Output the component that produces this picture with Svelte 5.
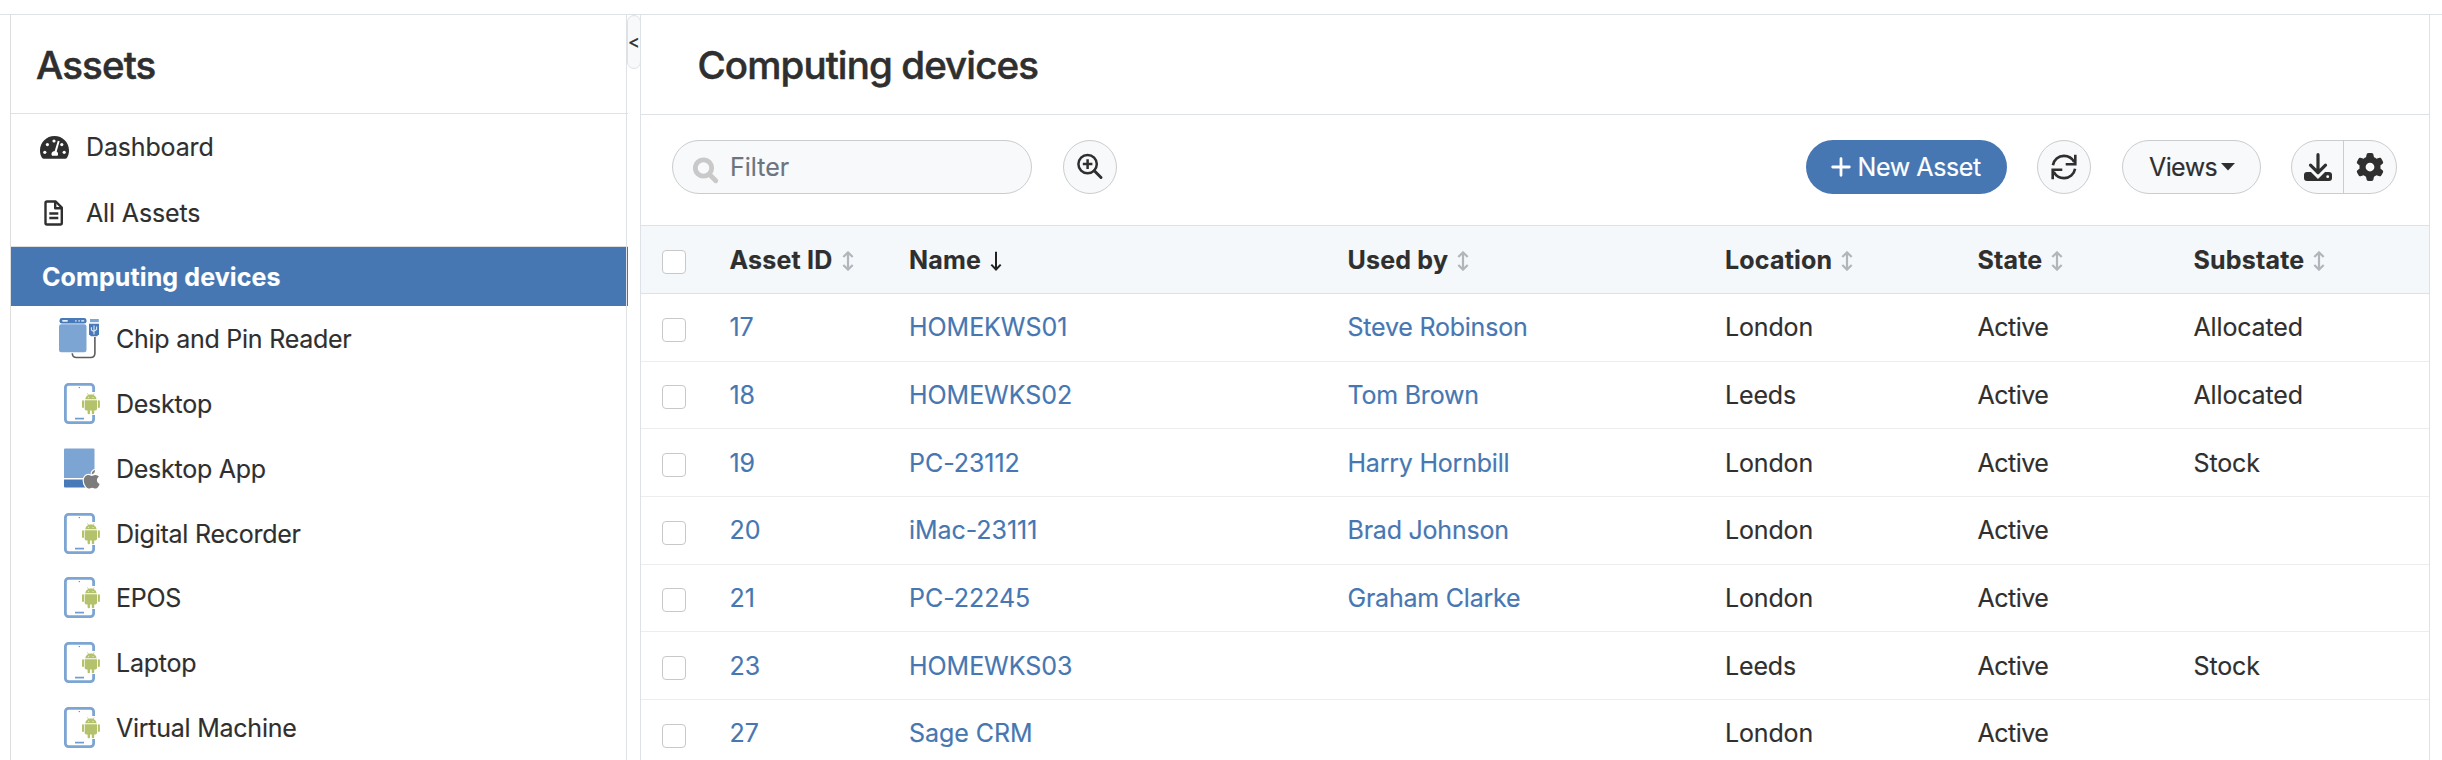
<script>
  const assetTypes = [
    { name: 'Chip and Pin Reader', icon: 'chip' },
    { name: 'Desktop', icon: 'tablet' },
    { name: 'Desktop App', icon: 'app' },
    { name: 'Digital Recorder', icon: 'tablet' },
    { name: 'EPOS', icon: 'tablet' },
    { name: 'Laptop', icon: 'tablet' },
    { name: 'Virtual Machine', icon: 'tablet' }
  ];

  const columns = ['Asset ID', 'Name', 'Used by', 'Location', 'State', 'Substate'];

  const rows = [
    { id: '17', name: 'HOMEKWS01', user: 'Steve Robinson', location: 'London', state: 'Active', substate: 'Allocated' },
    { id: '18', name: 'HOMEWKS02', user: 'Tom Brown', location: 'Leeds', state: 'Active', substate: 'Allocated' },
    { id: '19', name: 'PC-23112', user: 'Harry Hornbill', location: 'London', state: 'Active', substate: 'Stock' },
    { id: '20', name: 'iMac-23111', user: 'Brad Johnson', location: 'London', state: 'Active', substate: '' },
    { id: '21', name: 'PC-22245', user: 'Graham Clarke', location: 'London', state: 'Active', substate: '' },
    { id: '23', name: 'HOMEWKS03', user: '', location: 'Leeds', state: 'Active', substate: 'Stock' },
    { id: '27', name: 'Sage CRM', user: '', location: 'London', state: 'Active', substate: '' }
  ];
</script>

{#snippet typeIcon(kind)}
  <svg class="type-icon" width="42" height="42" viewBox="0 0 42 42">
    {#if kind === 'chip'}
      <rect x="0.5" y="0" width="27" height="5.6" rx="2.4" fill="#487ab9" />
      <path d="M4 2.8h4" stroke="#e6eef7" stroke-width="1.8" stroke-linecap="round" />
      <path d="M16.2 2.8h1.4M19.4 2.8h1.4M22.2 2.8h3" stroke="#c3d5ea" stroke-width="1.8" />
      <rect x="0" y="6.2" width="27.5" height="28" rx="2.2" fill="#7da5d3" />
      <rect x="31" y="1" width="8.8" height="3.2" fill="#7da5d3" />
      <path d="M30 5.8h10v10.4l-2 2h-6l-2-2z" fill="#487ab9" />
      <path d="M35 7.5v9M32.4 9.3v2.6l2.6 2M37.6 8.6v2.8l-2.6 2" fill="none" stroke="#dce7f4" stroke-width="1.1" />
      <path d="M13.3 35.2c0 2.5 1.7 4.3 4.2 4.3h14.2c2.5 0 4.2-1.7 4.2-4.2V19" fill="none" stroke="#5d5d5d" stroke-width="1.6" />
    {:else if kind === 'tablet'}
      <rect x="6.4" y="1.4" width="28.2" height="38.2" rx="3.2" fill="none" stroke="#7da5d3" stroke-width="2.8" />
      <rect x="32" y="9" width="4" height="23" fill="#fff" />
      <circle cx="20.3" cy="4.6" r="0.7" fill="#487ab9" />
      <path d="M16 35.6h9" stroke="#6f9bce" stroke-width="1.7" />
      <g fill="#b3c26b">
        <path d="M26.3 16.3c.2-2.8 2.6-4.7 5.600-4.700s5.400 1.900 5.600 4.700z" />
        <path d="M28.400 10.300l1.300 2M35.200 10.300l-1.300 2" stroke="#b3c26b" stroke-width=".7" />
        <path d="M25.700 17.200h12.300v8.500q0 1.700-1.600 1.700h-9.100q-1.600 0-1.600-1.700z" />
        <rect x="23" y="17.200" width="2" height="7.800" rx="1" />
        <rect x="38.900" y="17.200" width="2" height="7.800" rx="1" />
        <rect x="28.600" y="26" width="2.400" height="5.300" rx="1" />
        <rect x="32.800" y="26" width="2.400" height="5.300" rx="1" />
      </g>
      <circle cx="29.600" cy="14.300" r=".5" fill="#fff" />
      <circle cx="34" cy="14.300" r=".5" fill="#fff" />
    {:else}
      <path d="M5 1.500q0-1 1-1h28.500q1 0 1 1v28.500h-30.500z" fill="#7da5d3" />
      <path d="M5 31.500h30.500v8h-29.500q-1 0-1-1z" fill="#487ab9" />
      <g fill="#7c7c7c" stroke="#fff" stroke-width="2.400" stroke-linejoin="round" paint-order="stroke">
        <path d="M32.800 26.400c-.3-2.200 1.400-4.100 3.200-4.300.2 2.200-1.300 4.100-3.200 4.300z" />
        <path d="M32.700 27.900c1 0 2-1 3.700-1 1.400 0 2.700.7 3.500 1.900-3 1.900-2.500 5.900.7 7.100-.8 2.200-2.300 4.700-4 4.700-1.300 0-1.800-.8-3.400-.8s-2.200.8-3.400.8c-2.300 0-5-4.400-5-8 0-3.500 2.200-5.600 4.600-5.600 1.500 0 2.500.9 3.300.9z" />
      </g>
    {/if}
  </svg>
{/snippet}

<div class="page">
  <aside class="sidebar">
    <h2>Assets</h2>
    <nav>
      <a class="top-link" href="#dashboard">
        <svg width="29" height="23" viewBox="0 0 29 23">
          <path d="M14.500 0C6.500 0 0 6.400 0 14.400c0 2.700.7 5.200 2 7.400.4.700 1 1 1.700 1h21.600c.7 0 1.300-.3 1.700-1 1.300-2.200 2-4.700 2-7.400C29 6.400 22.500 0 14.500 0z" fill="#2f2f2f" />
          <g fill="#fff">
            <circle cx="4.800" cy="16.300" r="1.600" /><circle cx="7.400" cy="8.600" r="1.600" />
            <circle cx="14" cy="5" r="1.600" /><circle cx="21.800" cy="8.600" r="1.600" />
            <circle cx="24.200" cy="16.300" r="1.600" />
            <path d="M17.800 4.700l1.800.6-2.900 10.300c1.300.9 1.800 2.600.9 4.100h-5.600c-1.300-2.200.2-4.500 2.700-4.700z" />
          </g>
        </svg>
        <span>Dashboard</span>
      </a>
      <a class="top-link" href="#all">
        <svg width="29" height="26" viewBox="0 0 29 26">
          <g fill="none" stroke="#2f2f2f" stroke-width="2.400" stroke-linejoin="round">
            <path d="M7 1.500h8.700l6.100 6.100v15.400q0 1.500-1.500 1.500h-13.300q-1.500 0-1.500-1.500v-20q0-1.500 1.500-1.500z" />
            <path d="M15.200 1.500v6.700h6.600" />
            <path d="M9.300 13.500h9M9.300 18h9" />
          </g>
        </svg>
        <span>All Assets</span>
      </a>
    </nav>
    <a class="current" href="#computing">Computing devices</a>
    <nav class="types">
      {#each assetTypes as type}
        <a class="type-link" href="#type">
          {@render typeIcon(type.icon)}
          <span>{type.name}</span>
        </a>
      {/each}
    </nav>
  </aside>

  <div class="gutter"><button class="collapse" aria-label="Collapse">&lt;</button></div>

  <main>
    <h1>Computing devices</h1>
    <div class="toolbar">
      <div class="filter">
        <svg width="28" height="28" viewBox="0 0 28 28" fill="none" stroke="#c9c9c9" stroke-width="4.800">
          <circle cx="10.500" cy="11" r="8.200" />
          <path d="M16.500 17.500l6.300 6.300" stroke-linecap="round" />
        </svg>
        <span>Filter</span>
      </div>
      <button class="round" aria-label="Advanced search">
        <svg width="28" height="28" viewBox="0 0 28 28" fill="none" stroke="#2f2f2f" stroke-width="2.500">
          <circle cx="11.600" cy="11.100" r="9.200" />
          <path d="M6.800 11.100h9.600M11.600 6.300v9.600" />
          <path d="M18.300 17.800l6.700 6.700" stroke-width="3" stroke-linecap="round" />
        </svg>
      </button>
      <div class="spacer"></div>
      <button class="primary">
        <svg width="20" height="20" viewBox="0 0 20 20" stroke="#fff" stroke-width="2.800" stroke-linecap="round">
          <path d="M1.700 10h16.600M10 1.700v16.600" />
        </svg>
        <span>New Asset</span>
      </button>
      <button class="round refresh" aria-label="Refresh">
        <svg width="26" height="26" viewBox="0 0 26 26" fill="none" stroke="#2f2f2f" stroke-width="2.600">
          <path d="M1.900 11.200C2.900 5.800 7.300 1.900 12.900 1.900c4.500 0 8.400 2.500 10.400 6.200" />
          <path d="M24.300.7v9.600h-9.600" />
          <path d="M24.100 14.800c-1 5.400-5.500 9.300-11 9.300-4.500 0-8.400-2.500-10.400-6.200" />
          <path d="M1.700 25.300v-9.600h9.600" />
        </svg>
      </button>
      <button class="views">
        <span>Views</span>
        <svg width="14" height="8" viewBox="0 0 14 8"><path d="M0 0h14l-7 7.500z" fill="#2f2f2f" /></svg>
      </button>
      <div class="group">
        <button aria-label="Download">
          <svg width="28" height="28" viewBox="0 0 28 28">
            <rect x="0" y="19" width="28" height="9" rx="3" fill="#2f2f2f" />
            <path d="M5.500 13l8.500 8.300 8.500-8.300" fill="none" stroke="#f8f9fb" stroke-width="6.600" />
            <path d="M14 1.700v18M6.500 12.200l7.500 7.500 7.500-7.500" fill="none" stroke="#2f2f2f" stroke-width="3.200" stroke-linecap="round" stroke-linejoin="round" />
            <circle cx="23.700" cy="23.700" r="1.400" fill="#fff" />
          </svg>
        </button>
        <button aria-label="Settings">
          <svg width="28" height="28" viewBox="0 0 512 512">
            <path fill="#2f2f2f" d="M495.9 166.6c3.2 8.7 .5 18.4-6.4 24.6l-43.3 39.4c1.1 8.3 1.7 16.8 1.7 25.4s-.6 17.1-1.7 25.4l43.3 39.4c6.9 6.2 9.6 15.9 6.4 24.6c-4.400 11.900-9.700 23.300-15.800 34.300l-4.700 8.100c-6.600 11-14 21.400-22.100 31.200c-5.900 7.200-15.700 9.600-24.500 6.800l-55.700-17.700c-13.400 10.300-28.200 18.900-44 25.400l-12.500 57.100c-2 9.100-9 16.300-18.200 17.800c-13.800 2.300-28 3.500-42.500 3.500s-28.700-1.200-42.500-3.500c-9.200-1.500-16.200-8.700-18.200-17.800l-12.500-57.100c-15.800-6.500-30.600-15.100-44-25.400L83.100 425.900c-8.800 2.800-18.600 .3-24.500-6.800c-8.100-9.800-15.500-20.200-22.100-31.200l-4.700-8.100c-6.100-11-11.400-22.400-15.800-34.300c-3.200-8.700-.5-18.400 6.400-24.600l43.300-39.400C64.600 273.100 64 264.600 64 256s.6-17.100 1.700-25.400L22.400 191.200c-6.900-6.200-9.600-15.900-6.400-24.600c4.400-11.900 9.700-23.300 15.800-34.300l4.700-8.100c6.600-11 14-21.400 22.100-31.200c5.900-7.200 15.700-9.600 24.500-6.800l55.700 17.700c13.400-10.300 28.200-18.900 44-25.400l12.500-57.100c2-9.100 9-16.300 18.200-17.800C227.300 1.200 241.500 0 256 0s28.700 1.200 42.500 3.500c9.200 1.500 16.200 8.700 18.200 17.800l12.500 57.100c15.800 6.500 30.600 15.100 44 25.400l55.700-17.700c8.800-2.800 18.600-.3 24.500 6.800c8.100 9.800 15.500 20.200 22.100 31.200l4.700 8.100c6.100 11 11.400 22.400 15.800 34.300zM256 336a80 80 0 1 0 0-160 80 80 0 1 0 0 160z" />
          </svg>
        </button>
      </div>
    </div>

    <div class="table">
      <div class="row head">
        <div><span class="check"></span></div>
        {#each columns as column}
          <div>
            <span>{column}</span>
            {#if column === 'Name'}
              <svg class="sort" width="12" height="20" viewBox="0 0 12 20" fill="none" stroke="#222" stroke-width="2">
                <path d="M6 .7v17.800M1.300 13.600l4.700 4.900 4.700-4.900" />
              </svg>
            {:else}
              <svg class="sort" width="12" height="20" viewBox="0 0 12 20" fill="none" stroke="#b2b6ba" stroke-width="2.200">
                <path d="M6 1.500v17M1.300 6l4.700-4.600 4.700 4.600M1.300 14l4.700 4.600 4.700-4.600" />
              </svg>
            {/if}
          </div>
        {/each}
      </div>
      {#each rows as row}
        <div class="row">
          <div><span class="check"></span></div>
          <div><a class="plain" href="#asset">{row.id}</a></div>
          <div><a class="plain" href="#asset">{row.name}</a></div>
          <div>{#if row.user}<a href="#user">{row.user}</a>{/if}</div>
          <div>{row.location}</div>
          <div class="state">{row.state}</div>
          <div>{row.substate}</div>
        </div>
      {/each}
    </div>
  </main>
</div>

<style>
  :global(body) { margin: 0; background: #fff; overflow: hidden; }
  .page {
    box-sizing: border-box; height: 760px; padding: 15px 12px 0 10px;
    display: grid; grid-template-columns: 618px 12px 1fr; grid-template-rows: 745px; overflow: hidden;
    background: linear-gradient(#dee2e6, #dee2e6) 0 14px / 100% 1px no-repeat #fff;
    font: 400 25px/30px Inter, "Liberation Sans", sans-serif; letter-spacing: -0.15px; color: #2f2f2f;
    -webkit-text-stroke: 0.15px currentColor;
  }
  svg { display: block; flex: none; }
  a { color: inherit; text-decoration: none; }
  button { font: inherit; color: inherit; letter-spacing: inherit; padding: 0; margin: 0; cursor: pointer; }
  h1, h2 { margin: 0; box-sizing: border-box; font-weight: 500; font-size: 38.5px; line-height: 46px; letter-spacing: -0.9px; border-bottom: 1px solid #dee2e6; -webkit-text-stroke: 0.5px #2f2f2f; }

  .sidebar { position: relative; box-sizing: border-box; border-left: 1px solid #dedede; }
  .sidebar::after { content: ""; position: absolute; top: 0; bottom: 0; right: 1px; width: 1px; background: #dee2e6; }
  h2 { height: 99px; padding: 27px 0 0 25px; }
  nav { border-bottom: 1px solid #dedede; }
  .top-link { display: flex; align-items: center; height: 66px; padding-left: 29px; gap: 17px; }
  .current { display: flex; align-items: center; height: 59px; padding-left: 31px; background: #4677b2; color: #fff; font-weight: 700; letter-spacing: 0.11px; }
  .types { border: 0; padding-top: 0.7px; }
  .type-link { display: flex; align-items: center; height: 64.83px; padding-left: 48px; gap: 15px; letter-spacing: -0.25px; }

  .gutter { position: relative; }
  .collapse {
    position: absolute; left: -1px; top: 0; width: 14px; height: 54px; box-sizing: border-box; z-index: 1;
    border: 1px solid #dee2e6; border-radius: 7px; background: #f8f9fb; font-size: 18px; line-height: 18px;
    display: flex; justify-content: center; align-items: center; -webkit-text-stroke: 0.3px #2f2f2f;
  }

  main { border: 1px solid #dee2e6; border-width: 0 1px; min-width: 0; }
  h1 { height: 100px; padding: 27px 0 0 56.5px; letter-spacing: -0.9px; }
  .toolbar { display: flex; align-items: flex-start; box-sizing: border-box; height: 110px; padding: 25px 32px 0 31px; }
  .filter, .round, .views, .group { box-sizing: border-box; height: 54px; border: 1px solid #cacccd; background: #f8f9fb; border-radius: 27px; display: flex; align-items: center; }
  .filter { width: 360px; padding-left: 20px; gap: 9px; color: #6c757d; letter-spacing: 0; }
  .filter svg { position: relative; top: 4px; }
  .round { width: 54px; justify-content: center; margin-left: 31px; }
  .refresh { margin-left: 30px; }
  .spacer { flex: 1; }
  .primary { width: 201px; height: 54px; border: 0; border-radius: 27px; background: #4677b2; color: #fff; display: flex; align-items: center; padding-left: 25px; gap: 6.5px; white-space: nowrap; letter-spacing: -0.4px; }
  .views { width: 139px; margin-left: 31px; padding-left: 26px; gap: 4px; letter-spacing: -0.6px; }
  .group { width: 106px; margin-left: 30px; overflow: hidden; }
  .group button { width: 51px; height: 52px; border: 0; background: none; display: flex; align-items: center; justify-content: center; }
  .group button + button { width: 53px; border-left: 1px solid #cacccd; }

  .table { border-top: 1px solid #dee2e6; }
  .row {
    display: grid; grid-template-columns: 88.5px 179.5px 438.5px 377.5px 252.5px 216px 1fr; align-items: center;
    box-sizing: border-box; height: 67.67px; border-bottom: 1px solid #ebedee; white-space: nowrap;
  }
  .row > div { display: flex; align-items: center; }
  .row a { color: #4677b2; letter-spacing: -0.22px; }
  .row .plain { letter-spacing: -0.05px; }
  .row .state { letter-spacing: -0.5px; }
  .head { height: 68px; background: #f4f8fb; border-bottom-color: #dee2e6; font-weight: 700; letter-spacing: 0.2px; }
  .sort { margin: 2px 0 0 9px; }
  .check { width: 24px; height: 24px; box-sizing: border-box; border: 1px solid #c6c8ca; border-radius: 4px; background: #fff; margin: 5px 0 0 21px; }
</style>
